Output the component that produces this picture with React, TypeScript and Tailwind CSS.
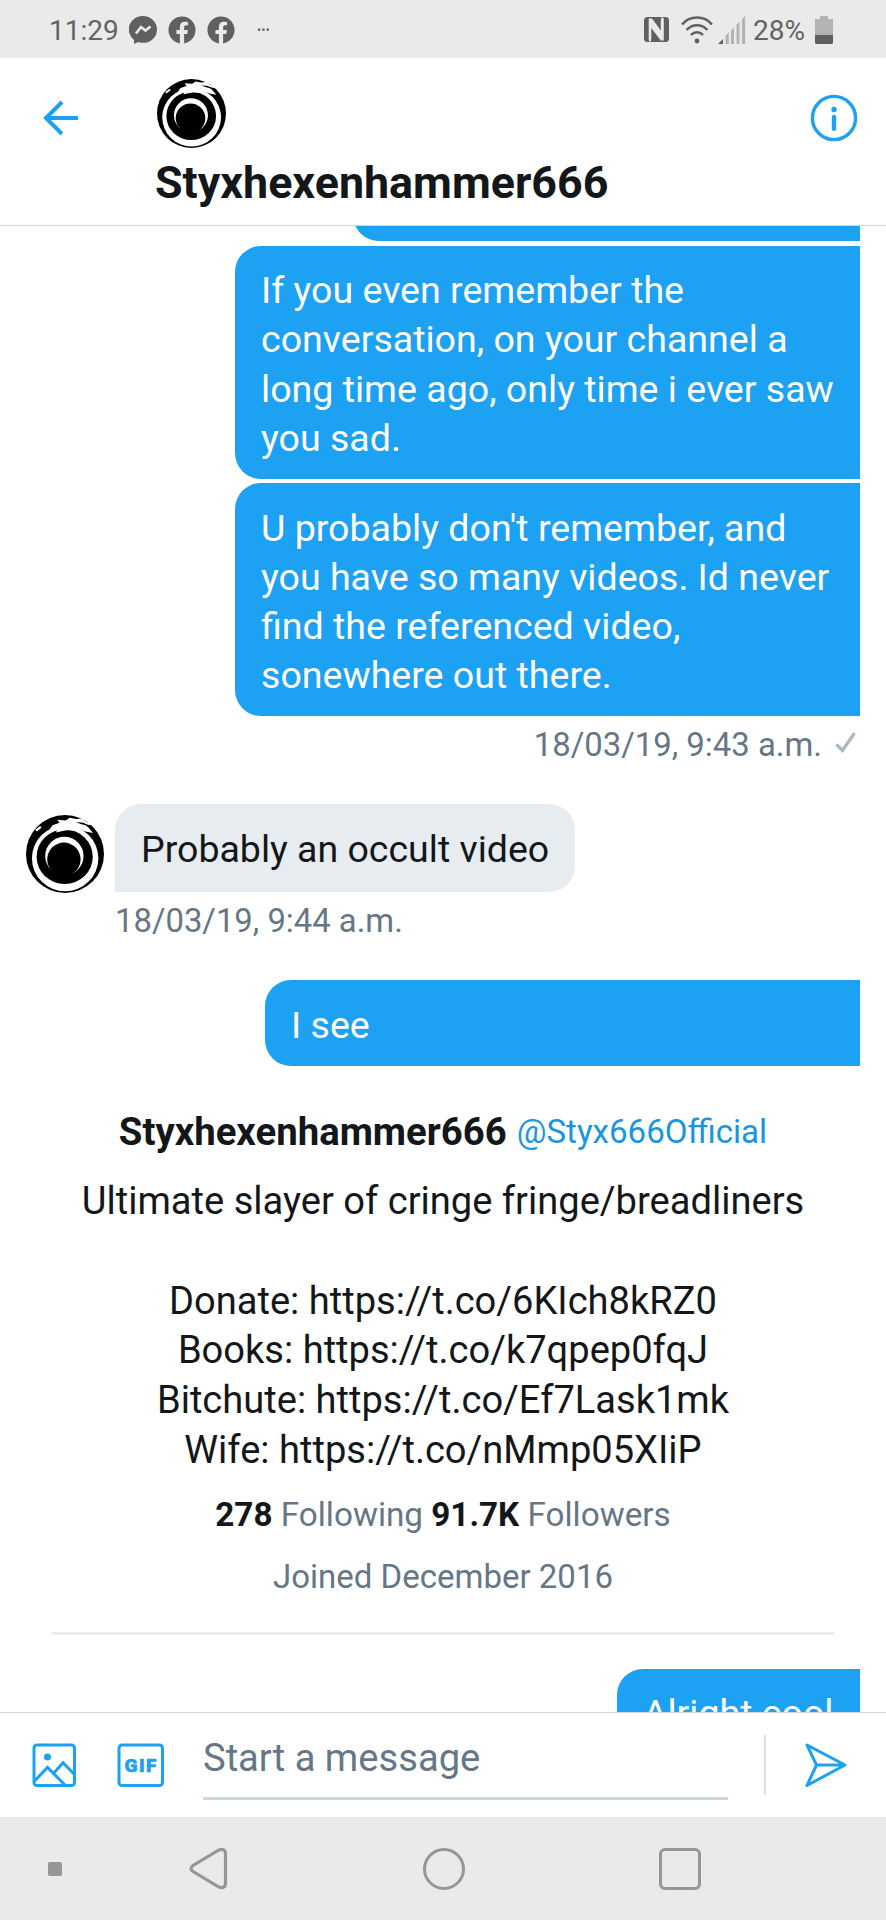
import React from 'react';
import { FaFacebook } from 'react-icons/fa';

const Avatar: React.FC<{ className?: string }> = ({ className }) => (
  <svg viewBox="0 0 100 100" className={className}>
    <circle cx="50" cy="50" r="50" fill="#000" />
    {/* Outer ring */}
    <ellipse cx="50.2" cy="55.500" rx="42.600" ry="42.200" fill="#fff" />
    <ellipse cx="49.6" cy="53.500" rx="36" ry="35" fill="#000" />
    {/* Serpent head */}
    <path
      d="M30 19L34 13L43 10L40 6L51 7L56 3.500L64 5L71 4.500L78 9L84 11L82 13L74 11L80 16L86 23L76 21L66 17.500L62 20L52 19.500L44 21L38 22.500L41 18.500L33 20Z"
      fill="#fff"
    />
    <path d="M12 19L18 14L20 16L14 21Z" fill="#fff" />
    <path d="M64 9L74 10L80 14L70 11.500Z" fill="#000" />
    {/* Crescent */}
    <circle cx="49.200" cy="52.500" r="24.600" fill="#fff" />
    <circle cx="48.600" cy="56.800" r="21.400" fill="#000" />
  </svg>
);

const StatusBar = () => (
  <div className="flex h-[58px] shrink-0 items-center bg-[#eaeaea] pl-[49px] pr-[53px] pt-px text-[28px] leading-none text-[#636363]">
    <span className="pt-[2px]">11:29</span>
    <div className="ml-[10px] flex items-center gap-[11px]">
      <svg width="28" height="28" viewBox="0 0 28 28">
        <path d="M14 0a14 13.4 0 0 1 0 26.8c-1.700 0-3.300-.3-4.800-.9L5 28v-4A13.400 13.400 0 0 1 14 0Z" fill="#606060" />
        <path d="M7 17.500l5-6.500 4.500 3.500 5-4" fill="none" stroke="#eaeaea" strokeWidth="2.600" />
      </svg>
      <FaFacebook size={28} color="#606060" />
      <FaFacebook size={28} color="#606060" />
    </div>
    <svg className="ml-[22px]" width="13" height="4" viewBox="0 0 13 4" fill="#606060">
      <rect x="1" y="0.500" width="2.300" height="2.300" />
      <rect x="5.300" y="0.500" width="2.300" height="2.300" />
      <rect x="9.600" y="0.500" width="2.300" height="2.300" />
    </svg>
    <div className="ml-auto flex items-center">
      {/* NFC */}
      <svg width="25" height="25" viewBox="0 0 25 25">
        <rect width="25" height="25" rx="3.500" fill="#606060" />
        <path d="M6 25q-1.300-.8-1.300-2.500V1.500H8L16.800 13.500V4.500Q16.800 1.500 18 0Q19.800 .8 19.800 2.500V23.500H16.800L7.300 11V21Q7.300 24 6 25Z" fill="#eaeaea" />
      </svg>
      {/* Wi-Fi */}
      <svg className="ml-[12px]" width="32" height="28" viewBox="0 0 32 28" fill="none" stroke="#606060" strokeWidth="2.500">
        <path d="M1 8.500C9 -.7 23 -.7 31 8.500M5.500 14c6-6.500 15-6.500 21 0M10 19c3.500-3.800 8.500-3.800 12 0" />
        <circle cx="16" cy="25" r="2.400" fill="#606060" stroke="none" />
      </svg>
      {/* Signal */}
      <svg className="ml-[5px]" width="28" height="28" viewBox="0 0 28 28">
        <path d="M0 28l5-5v5Z" fill="#606060" />
        <path d="M7.500 28v-8l3.300-3.400V28ZM13 28V14.500l3-3V28ZM18.500 28V9l3-3.200V28ZM24 28V3.300L27.200 0v28Z" fill="#b3b3b3" />
      </svg>
      <span className="ml-[7px] pt-[2px]">28%</span>
      <svg className="ml-[10px]" width="18" height="28" viewBox="0 0 18 28">
        <path d="M5 0h8v3h5v16H0V3h5Z" fill="#b3b3b3" />
        <path d="M0 19h18v7.500a1.500 1.500 0 0 1-1.500 1.500h-15A1.500 1.500 0 0 1 0 26.500Z" fill="#606060" />
      </svg>
    </div>
  </div>
);

const Header = () => (
  <div className="flex h-[168px] shrink-0 items-start border-b border-[#ccd6dd] bg-white pl-[43px] pr-[28px]">
    <svg className="mt-[42px]" width="36" height="36" viewBox="0 0 36 36" fill="none" stroke="#1da1f2" strokeWidth="4">
      <path d="M35 18H3M19 2L3 18l16 16" />
    </svg>
    <div className="ml-[76px] flex flex-col">
      <Avatar className="ml-[2px] mt-[21px] h-[69px] w-[69px]" />
      <h1 className="mt-[9px] text-[44.800px] font-bold leading-[52px] text-[#14171a]">Styxhexenhammer666</h1>
    </div>
    <svg className="ml-auto mt-[36px]" width="48" height="48" viewBox="0 0 48 48" fill="none" stroke="#1da1f2">
      <circle cx="24" cy="24" r="21.600" strokeWidth="3.400" />
      <circle cx="24" cy="15.500" r="2.700" fill="#1da1f2" stroke="none" />
      <path d="M24 23v11.800" strokeWidth="4.400" strokeLinecap="round" />
    </svg>
  </div>
);

interface BubbleProps {
  className: string;
  children?: React.ReactNode;
}

const Sent: React.FC<BubbleProps> = ({ className, children }) => (
  <div className={`self-end whitespace-nowrap bg-[#1da1f2] pl-[26px] text-[37.550px] leading-[49.300px] text-white ${className}`}>
    {children}
  </div>
);

const Thread = () => (
  <div className="flex min-h-0 flex-1 flex-col overflow-hidden pl-[26px] pr-[26px]">
    <Sent className="-mt-[73px] h-[88px] w-[507px] shrink-0 rounded-l-[26px]" />
    <Sent className="mt-[5px] h-[233px] w-[625px] shrink-0 rounded-l-[26px] pt-[20px]">
      If you even remember the<br />
      conversation, on your channel a<br />
      long time ago, only time i ever saw<br />
      you sad.
    </Sent>
    <Sent className="mt-[4px] h-[233px] w-[625px] shrink-0 rounded-l-[26px] pt-[20.500px]">
      U probably don't remember, and<br />
      you have so many videos. Id never<br />
      find the referenced video,<br />
      sonewhere out there.
    </Sent>
    <div className="mt-[9px] flex h-[39px] shrink-0 justify-end text-[32.900px] leading-[40px] text-[#657786]">
      <span>18/03/19, 9:43 a.m.</span>
      <svg className="ml-[13px] mr-[4px] mt-[7px]" width="21" height="21" viewBox="0 0 21 21" fill="none" stroke="#aab8c2" strokeWidth="3.200">
        <path d="M1.500 12.500l6 6L19.500 1" />
      </svg>
    </div>

    <div className="mt-[40px] flex h-[89px] shrink-0 items-end">
      <Avatar className="h-[78px] w-[78px]" />
      <div className="ml-[11px] h-[88px] w-[460px] self-start whitespace-nowrap rounded-[26px] rounded-bl-none bg-[#e6ecf0] pl-[26px] pt-[21px] text-[37.500px] leading-[49.300px] text-[#14171a]">
        Probably an occult video
      </div>
    </div>
    <div className="ml-[89px] mt-[8px] h-[40px] shrink-0 text-[32.850px] leading-[40px] text-[#657786]">18/03/19, 9:44 a.m.</div>

    <Sent className="mt-[39px] h-[86px] w-[595px] shrink-0 rounded-l-[26px] pt-[21px]">I see</Sent>

    {/* Profile summary */}
    <div className="mx-[26px] mt-[41px] flex h-[528px] shrink-0 flex-col items-center whitespace-nowrap border-b-[3px] border-[#e6ecf0] text-[#14171a]">
      <div className="flex h-[50px] gap-[10px] leading-[50px]">
        <span className="text-[38.350px] font-bold">Styxhexenhammer666</span>
        <span className="text-[33.100px] text-[#1b95e0]">@Styx666Official</span>
      </div>
      <div className="mt-[20px] h-[299px] text-center text-[38.100px] leading-[49.800px]">
        Ultimate slayer of cringe fringe/breadliners<br />
        <br />
        Donate: https://t.co/6KIch8kRZ0<br />
        Books: https://t.co/k7qpep0fqJ<br />
        Bitchute: https://t.co/Ef7Lask1mk<br />
        Wife: https://t.co/nMmp05XIiP
      </div>
      <div className="mt-[19px] h-[40px] text-[33.250px] leading-[40px] text-[#657786]">
        <b className="text-[#14171a]">278</b> Following <b className="text-[#14171a]">91.7K</b> Followers
      </div>
      <div className="mt-[22px] h-[40px] text-[33px] leading-[40px] text-[#657786]">Joined December 2016</div>
    </div>

    <Sent className="mt-[34px] h-[88px] w-[243px] shrink-0 rounded-tl-[26px] pt-[20px]">Alright cool</Sent>
  </div>
);

const Composer = () => (
  <div className="flex h-[105px] shrink-0 items-start border-t border-[#ccd6dd] bg-white pl-[32px]">
    <svg className="mt-[30px]" width="44" height="44" viewBox="0 0 44 44" fill="none" stroke="#1da1f2" strokeWidth="3">
      <rect x="2" y="2" width="40.500" height="40.500" rx="3" />
      <circle cx="15.500" cy="14" r="3.500" fill="#1da1f2" stroke="none" />
      <path d="M2.500 38L15.500 24.500 33 42M21.500 30.500L31 19.800 42 31" />
    </svg>
    <svg className="ml-[41px] mt-[30px]" width="47" height="44" viewBox="0 0 47 44">
      <rect x="2" y="2" width="43.500" height="40.500" rx="3" fill="none" stroke="#1da1f2" strokeWidth="3" />
      <text x="7.500" y="28.800" fontSize="19" fontWeight="900" textLength="32" fill="#1da1f2" stroke="#1da1f2" strokeWidth=".6">GIF</text>
    </svg>
    <div className="ml-[39px] mt-[14px] h-[73px] w-[525px] border-b-[3px] border-[#ccd6dd] pt-[6px] text-[38.150px] leading-[50px] text-[#657786]">
      Start a message
    </div>
    <div className="ml-[36px] mt-[22px] h-[60px] w-[2px] bg-[#d9e0e6]" />
    <svg className="ml-[39px] mt-[30px]" width="42" height="44" viewBox="0 0 42 44" fill="none" stroke="#1da1f2" strokeWidth="3" strokeLinejoin="round">
      <path d="M2 2l38 20L2 42.500 11.500 22ZM11.500 22H40" />
    </svg>
  </div>
);

const NavBar = () => (
  <div className="flex h-[103px] shrink-0 items-center bg-[#eaeaea] pl-[48px]">
    <div className="h-[14px] w-[14px] rounded-[2px] bg-[#969696]" />
    <svg className="ml-[127px]" width="39" height="43" viewBox="0 0 39 43" fill="none" stroke="#969696" strokeWidth="3.200">
      <path d="M4 18.500L29.500 3.200Q36.500 .5 36.500 7v29q0 6.500-7 3.800L4 24.500q-4-3 0-6Z" />
    </svg>
    <div className="ml-[195px] h-[42px] w-[42px] rounded-full border-[3px] border-[#969696]" />
    <div className="ml-[194px] h-[42px] w-[42px] rounded-[6px] border-[3px] border-[#969696]" />
  </div>
);

export default function App() {
  return (
    <div className="flex h-[1920px] w-[886px] flex-col overflow-hidden bg-white font-[Roboto,sans-serif]">
      <StatusBar />
      <Header />
      <Thread />
      <Composer />
      <NavBar />
    </div>
  );
}
